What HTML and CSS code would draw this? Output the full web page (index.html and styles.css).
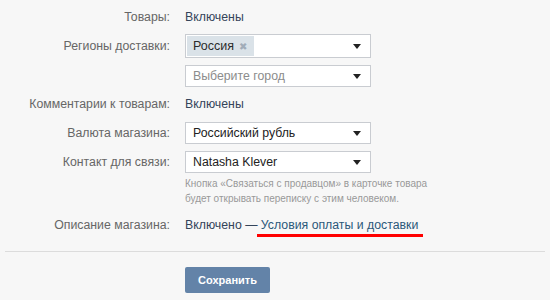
FILE: index.html
```html
<!DOCTYPE html>
<html lang="ru">
<head>
<meta charset="utf-8">
<link rel="stylesheet" href="styles.css">
</head>
<body>
<div class="form">
  <div class="row r1">
    <div class="label">Товары:</div>
    <div class="value">Включены</div>
  </div>
  <div class="row r2">
    <div class="label">Регионы доставки:</div>
    <div class="select tall">
      <span class="tag">Россия <span class="x">✖</span></span>
      <span class="arrow"></span>
    </div>
  </div>
  <div class="row r3">
    <div class="label"></div>
    <div class="select"><span class="ph">Выберите город</span><span class="arrow"></span></div>
  </div>
  <div class="row r4">
    <div class="label">Комментарии к товарам:</div>
    <div class="value">Включены</div>
  </div>
  <div class="row r5">
    <div class="label">Валюта магазина:</div>
    <div class="select"><span class="sv">Российский рубль</span><span class="arrow"></span></div>
  </div>
  <div class="row r6">
    <div class="label">Контакт для связи:</div>
    <div class="select"><span class="sv">Natasha Klever</span><span class="arrow"></span></div>
  </div>
  <div class="hint">Кнопка «Связаться с продавцом» в карточке товара<br>будет открывать переписку с этим человеком.</div>
  <div class="row r7">
    <div class="label">Описание магазина:</div>
    <div class="value">Включено — <span class="link">Условия оплаты и доставки</span></div>
  </div>
  <div class="divider"></div>
  <div class="actions"><button class="btn">Сохранить</button></div>
</div>
</body>
</html>
```
FILE: styles.css
```css
html, body {
  margin: 0;
  padding: 0;
  background: #f7f7f7;
  font-family: "Liberation Sans", Arial, sans-serif;
  font-size: 12.3px;
  color: #333;
}
.form {
  width: 550px;
  height: 300px;
  padding-top: 6px;
  box-sizing: border-box;
}
.row {
  display: flex;
  align-items: center;
  height: 22px;
}
.label {
  width: 170px;
  text-align: right;
  color: #666;
  flex: none;
}
.value {
  margin-left: 15px;
  color: #34445a;
}
.r2 { margin-top: 6px; height: 24px; }
.r3 { margin-top: 7px; }
.r4 { margin-top: 6px; }
.r5 { margin-top: 7px; }
.r6 { margin-top: 7px; }
.r7 { margin-top: 8px; }
.select {
  margin-left: 15px;
  width: 186px;
  height: 22px;
  box-sizing: border-box;
  border: 1px solid #c9ccd1;
  background: #fff;
  display: flex;
  align-items: center;
  padding: 0 9px 0 7px;
  position: relative;
}
.select.tall { height: 24px; padding-left: 1px; }
.arrow {
  margin-left: auto;
  width: 0;
  height: 0;
  border-left: 4px solid transparent;
  border-right: 4px solid transparent;
  border-top: 5px solid #222;
}
.tag {
  background: #dae2e8;
  height: 20px;
  line-height: 20px;
  padding: 0 7px 0 6px;
  color: #2b2b2b;
  font-size: 12.5px;
}
.tag .x {
  color: #a1acb8;
  font-size: 10px;
  margin-left: 2px;
}
.ph { color: #8c8c8c; }
.sv { color: #222; }
.hint {
  margin-left: 185px;
  margin-top: 3px;
  font-size: 10px;
  line-height: 15px;
  color: #999;
}
.link {
  color: #2b587a;
  position: relative;
}
.link::after {
  content: "";
  position: absolute;
  left: -4px;
  right: -5px;
  bottom: -5px;
  height: 3px;
  background: #f00;
}
.divider {
  margin: 15px 5px 0 5px;
  height: 1px;
  background: #dcdcdc;
}
.actions {
  margin-top: 15px;
  padding-left: 185px;
}
.btn {
  width: 85px;
  height: 26px;
  border: 0;
  border-radius: 2px;
  background: #6383a8;
  color: #fff;
  font-family: "Liberation Sans", Arial, sans-serif;
  font-weight: bold;
  font-size: 11px;
  padding: 0;
}
```
